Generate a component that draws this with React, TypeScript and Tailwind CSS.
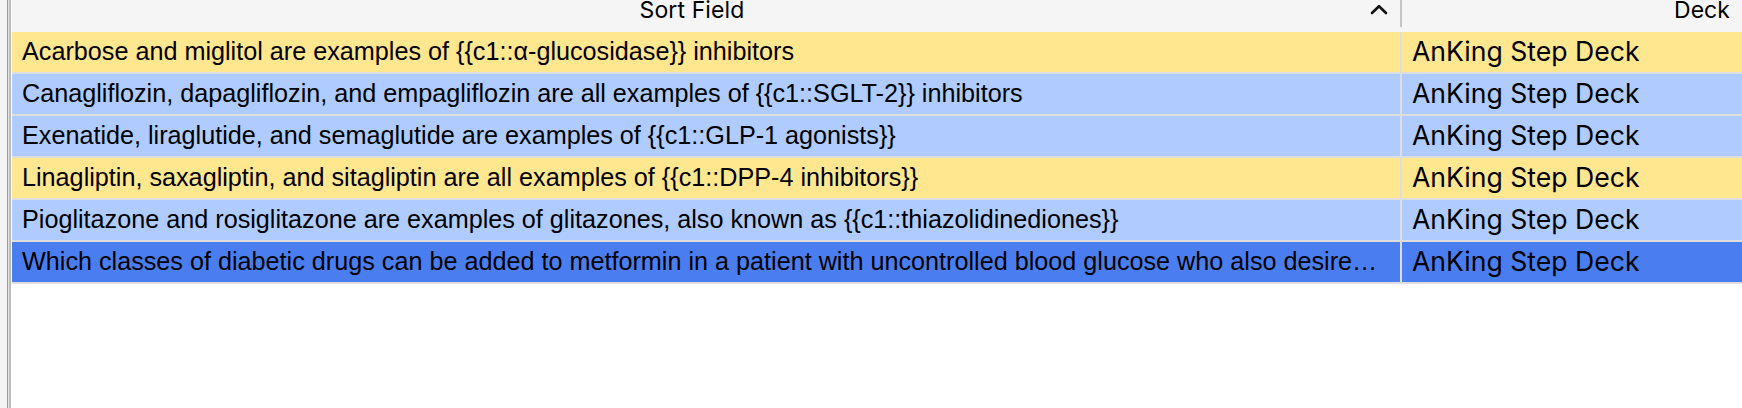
import React from "react";

type Row = { text: string; deck: string; kind: "yellow" | "blue" | "selected" };

const rows: Row[] = [
  { text: "Acarbose and miglitol are examples of {{c1::α-glucosidase}} inhibitors", deck: "AnKing Step Deck", kind: "yellow" },
  { text: "Canagliflozin, dapagliflozin, and empagliflozin are all examples of {{c1::SGLT-2}} inhibitors", deck: "AnKing Step Deck", kind: "blue" },
  { text: "Exenatide, liraglutide, and semaglutide are examples of {{c1::GLP-1 agonists}}", deck: "AnKing Step Deck", kind: "blue" },
  { text: "Linagliptin, saxagliptin, and sitagliptin are all examples of {{c1::DPP-4 inhibitors}}", deck: "AnKing Step Deck", kind: "yellow" },
  { text: "Pioglitazone and rosiglitazone are examples of glitazones, also known as {{c1::thiazolidinediones}}", deck: "AnKing Step Deck", kind: "blue" },
  { text: "Which classes of diabetic drugs can be added to metformin in a patient with uncontrolled blood glucose who also desire…", deck: "AnKing Step Deck", kind: "selected" },
];

const bgFor = (k: Row["kind"]) =>
  k === "yellow" ? "bg-[#ffe78f]" : k === "blue" ? "bg-[#afcbff]" : "bg-[#4a7ef0]";

export default function App() {
  return (
    <div className="w-[1742px] h-[408px] overflow-hidden bg-[#f4f4f4] flex">
      <div className="w-[7px] shrink-0 bg-[#f4f4f4]" />
      <div className="w-px shrink-0 bg-[#9c9c9c]" />
      <div className="w-px shrink-0 bg-[#e4e4e4]" />
      <div className="w-[2px] shrink-0 bg-[#bcbcbc]" />
      <div className="flex-1 min-w-0 bg-white pl-px overflow-hidden">
        <div className="w-[2100px]">
          {/* Header */}
          <div className="h-[32px] flex bg-[#f5f5f5] font-['Inter',sans-serif] text-[23px] text-black">
            <div className="w-[1390px] shrink-0 relative flex">
              <div className="flex-1 flex justify-center pr-[30px]">
                <span className="leading-[22px] -mt-px tracking-[0.1px]">Sort Field</span>
              </div>
              <div className="absolute left-[1358px] top-[3px]">
                <svg width="18" height="12" viewBox="0 0 18 12">
                  <polyline points="2,10 9,3.2 16,10" fill="none" stroke="#111" strokeWidth="2.6" strokeLinecap="round" strokeLinejoin="round" />
                </svg>
              </div>
              <div className="absolute right-0 top-0 w-[2px] h-[27px] bg-[#c4c4c4]" />
            </div>
            <div className="w-[600px] shrink-0 flex justify-center">
              <span className="leading-[22px] -mt-px">Deck</span>
            </div>
          </div>
          {/* Rows */}
          {rows.map((r, i) => (
            <div key={i} className={`h-[42px] flex border-b-2 border-[#dedede] ${bgFor(r.kind)}`}>
              <div className="w-[1390px] shrink-0 border-r-2 border-[#dedede] pl-[10px] overflow-hidden whitespace-nowrap font-['Liberation_Sans',Arial,sans-serif] text-[25.2px] leading-[38px] text-black">
                {r.text}
              </div>
              <div className="flex-1 pl-[10px] whitespace-nowrap font-['Inter',sans-serif] text-[26.6px] leading-[39px] text-black">
                {r.deck}
              </div>
            </div>
          ))}
        </div>
      </div>
    </div>
  );
}
